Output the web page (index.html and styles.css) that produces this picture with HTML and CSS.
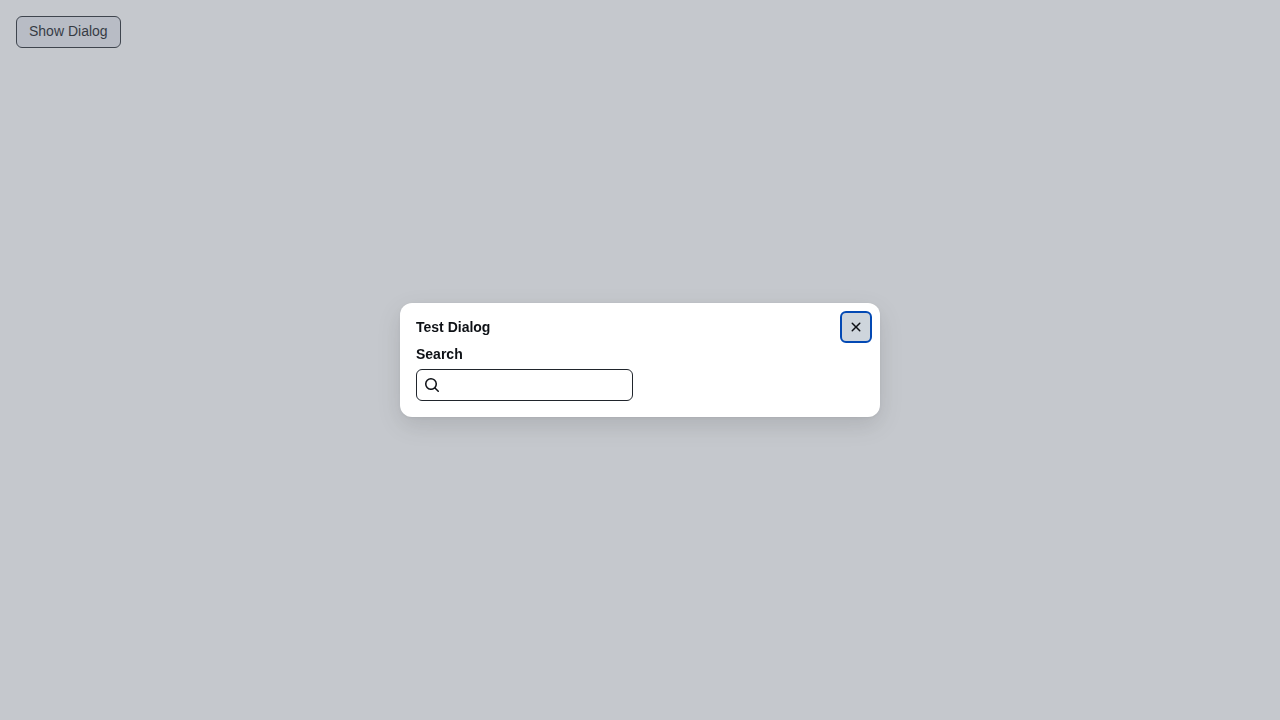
FILE: index.html
```html
<!DOCTYPE html>
<html lang="en">
<head>
<meta charset="utf-8">
<meta name="viewport" content="width=device-width, initial-scale=1">
<title>Test Dialog</title>
<link rel="stylesheet" href="styles.css">
</head>
<body>
<main class="page">
  <button class="button" type="button">Show Dialog</button>
</main>
<div class="backdrop">
  <section class="dialog" role="dialog" aria-modal="true" aria-labelledby="dialog-title">
    <header class="dialog-header">
      <h1 class="dialog-title" id="dialog-title">Test Dialog</h1>
      <button class="close-button" type="button" aria-label="Close">
        <svg width="16" height="16" viewBox="0 0 16 16" fill="currentColor" aria-hidden="true"><path d="M3.72 3.72a.75.75 0 0 1 1.06 0L8 6.94l3.22-3.22a.749.749 0 0 1 1.275.326.749.749 0 0 1-.215.734L9.06 8l3.22 3.22a.749.749 0 0 1-.326 1.275.749.749 0 0 1-.734-.215L8 9.06l-3.22 3.22a.751.751 0 0 1-1.042-.018.751.751 0 0 1-.018-1.042L6.94 8 3.72 4.78a.75.75 0 0 1 0-1.06Z"/></svg>
      </button>
    </header>
    <div class="dialog-body">
      <label class="label" for="search">Search</label>
      <div class="field">
        <svg width="16" height="16" viewBox="0 0 16 16" fill="currentColor" aria-hidden="true"><path d="M10.68 11.74a6 6 0 0 1-7.922-8.982 6 6 0 0 1 8.982 7.922l3.04 3.04a.749.749 0 0 1-.326 1.275.749.749 0 0 1-.734-.215ZM11.5 7a4.499 4.499 0 1 0-8.997 0A4.499 4.499 0 0 0 11.5 7Z"/></svg>
        <input class="field-input" id="search" type="text">
      </div>
    </div>
  </section>
</div>
</body>
</html>
```

FILE: styles.css
```css
* { box-sizing: border-box; }

body {
  margin: 0;
  background: #ffffff;
  color: #0e1116;
  font-family: "Liberation Sans", Arial, sans-serif;
  font-size: 14px;
  line-height: 20px;
}

.page { padding: 16px; }

.button {
  height: 32px;
  padding: 0 12px 2px;
  border: 1px solid #20252c;
  border-radius: 6px;
  background: #e9ebf2;
  color: #0e1116;
  font: inherit;
  line-height: 20px;
}

.backdrop {
  position: fixed;
  inset: 0;
  display: flex;
  align-items: center;
  justify-content: center;
  background: #6e768266;
}

.dialog {
  width: 480px;
  max-width: calc(100% - 64px);
  border-radius: 12px;
  background: #ffffff;
  box-shadow: 0 1px 3px #0000000f, 0 8px 24px #0000001f;
}

.dialog-header {
  display: flex;
  align-items: center;
  justify-content: space-between;
  padding: 8px 8px 0 16px;
}

.dialog-title {
  margin: 0;
  font-size: 14px;
  font-weight: 600;
}

.close-button {
  display: grid;
  place-items: center;
  width: 32px;
  height: 32px;
  padding: 0;
  border: 2px solid #0349b4;
  border-radius: 6px;
  background: #ced5dc;
  color: #0e1116;
}

.dialog-body { padding: 0 16px 16px; }

.label {
  display: block;
  margin: 1px 0 5px;
  font-weight: 600;
}

.field {
  display: inline-flex;
  align-items: center;
  gap: 8px;
  height: 32px;
  padding: 0 12px 0 7px;
  border: 1px solid #20252c;
  border-radius: 6px;
  vertical-align: top;
}

.field-input {
  width: 172px;
  padding: 0;
  border: 0;
  outline: 0;
  background: transparent;
  color: inherit;
  font: inherit;
}
```
